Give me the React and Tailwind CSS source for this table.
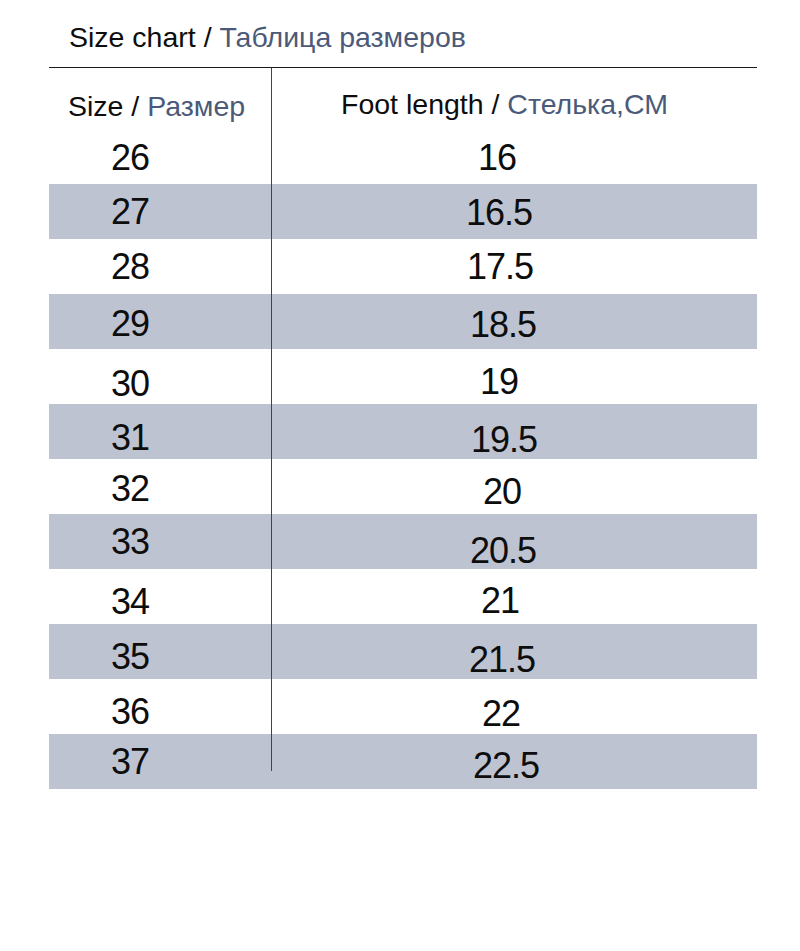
import React from "react";

const rows = [
  { size: "26", foot: "16", sy: "translate-y-[1px]", fy: "translate-y-[1px]", fx: "-translate-x-[3px]" },
  { size: "27", foot: "16.5", sy: "translate-y-[0px]", fy: "translate-y-[1px]", fx: "-translate-x-[1px]" },
  { size: "28", foot: "17.5", sy: "translate-y-[0px]", fy: "translate-y-[0px]", fx: "translate-x-[0px]" },
  { size: "29", foot: "18.5", sy: "translate-y-[2px]", fy: "translate-y-[3px]", fx: "translate-x-[3px]" },
  { size: "30", foot: "19", sy: "translate-y-[7px]", fy: "translate-y-[5px]", fx: "-translate-x-[1px]" },
  { size: "31", foot: "19.5", sy: "translate-y-[6px]", fy: "translate-y-[8px]", fx: "translate-x-[4px]" },
  { size: "32", foot: "20", sy: "translate-y-[2px]", fy: "translate-y-[5px]", fx: "translate-x-[2px]" },
  { size: "33", foot: "20.5", sy: "translate-y-[0px]", fy: "translate-y-[9px]", fx: "translate-x-[3px]" },
  { size: "34", foot: "21", sy: "translate-y-[5px]", fy: "translate-y-[4px]", fx: "translate-x-[0px]" },
  { size: "35", foot: "21.5", sy: "translate-y-[5px]", fy: "translate-y-[8px]", fx: "translate-x-[2px]" },
  { size: "36", foot: "22", sy: "translate-y-[5px]", fy: "translate-y-[7px]", fx: "translate-x-[1px]" },
  { size: "37", foot: "22.5", sy: "translate-y-[0px]", fy: "translate-y-[4px]", fx: "translate-x-[6px]" },
];

export default function App() {
  return (
    <div className="w-[800px] h-[951px] bg-white text-[#0d0d0d] font-['Liberation_Sans',Arial,sans-serif]">
      <div className="ml-[49px] w-[708px]">
        <div className="h-[68px] border-b border-[#1a1a1a] pt-[22px] pl-[20px] text-[28.5px] leading-[30px] whitespace-nowrap">
          Size chart / <span className="text-[#4b5a78]">Таблица размеров</span>
        </div>
        <div className="relative">
          <div className="absolute left-[222px] top-0 h-[703px] w-px bg-[#34446a]" />
          <div className="flex h-[61px] text-[28.5px] leading-[30px] whitespace-nowrap">
            <div className="w-[222px] pl-[19px] pt-[23px]">
              Size / <span className="text-[#4b5a78]">Размер</span>
            </div>
            <div className="flex-1 pl-[70px] pt-[21px]">
              Foot length / <span className="text-[#4b5a78]">Стелька,СМ</span>
            </div>
          </div>
          {rows.map((r, i) => (
            <div
              key={r.size}
              className={
                "flex h-[55px] text-[36px] leading-[55px] tracking-[-1px] " +
                (i % 2 === 1 ? "bg-[#bdc3d0]" : "bg-white")
              }
            >
              <div className="w-[222px] pl-[62px]">
                <span className={"inline-block " + r.sy}>{r.size}</span>
              </div>
              <div className="flex flex-1 justify-center pr-[28px]">
                <span className={"inline-block " + r.fy + " " + r.fx}>{r.foot}</span>
              </div>
            </div>
          ))}
        </div>
      </div>
    </div>
  );
}
